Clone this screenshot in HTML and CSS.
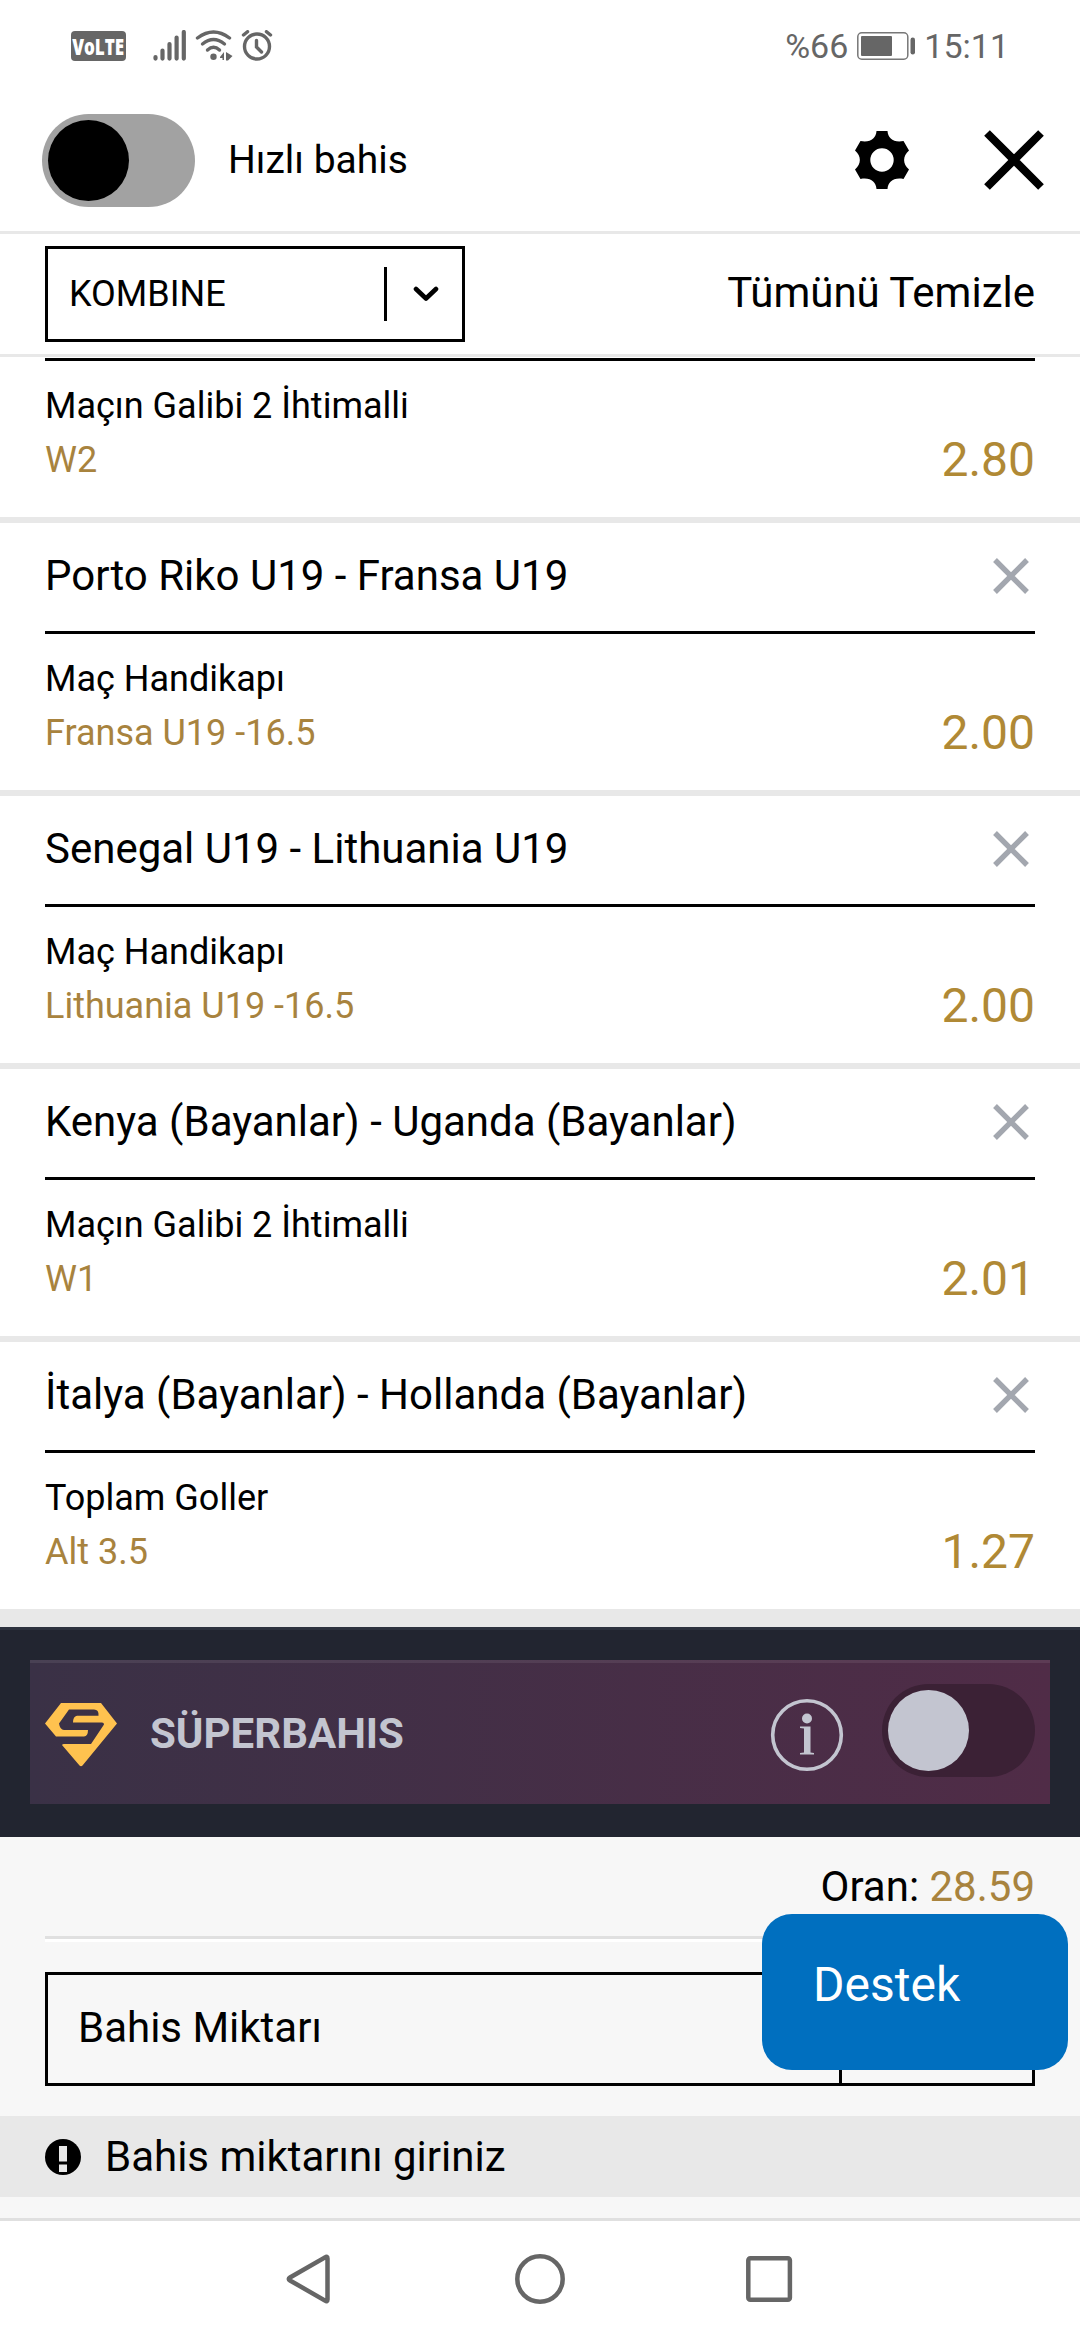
FILE: index.html
```html
<!DOCTYPE html>
<html lang="tr">
<head>
<meta charset="utf-8">
<title>Bahis Kuponu</title>
<link rel="stylesheet" href="styles.css">
</head>
<body>
<div class="screen">
  <div class="status">
    <span class="volte"><span class="volte-text">VoLTE</span></span>
    <svg class="signal" width="34" height="32" viewBox="0 0 34 32"><path d="M2.500 27V28.600M9.500 20.500V28.600M16.500 14V28.600M23.600 7.500V28.600M30.800 2V28.600" stroke="#666" stroke-width="4.200" stroke-linecap="round"/></svg>
    <svg class="wifi" width="38" height="32" viewBox="0 0 38 32"><g fill="none" stroke="#666" stroke-width="3.400" stroke-linecap="round"><path d="M2.500 8Q18.500-4 34.500 8"/><path d="M7.500 14Q18.500 5 29.500 14"/><path d="M12.500 20Q18.500 14.500 24.500 20"/></g><circle cx="18.500" cy="26.700" r="3.200" fill="#666"/><path d="M25 27L29 22V30H27.500V28H25ZM31 22L37.500 26L33 30.500H31Z" fill="#666"/></svg>
    <svg class="alarm" width="32" height="32" viewBox="0 0 32 32"><g fill="none" stroke="#666" stroke-width="3.400" stroke-linecap="round"><circle cx="16" cy="16.500" r="12.500"/><path d="M15.500 10.500V17L20.500 22M2.500 5L6.500 1.700M29.500 5L25.500 1.700"/></g></svg>
    <span class="percent">%66</span>
    <svg class="battery" width="59" height="28" viewBox="0 0 59 28"><rect x=".8" y=".8" width="50" height="26.400" rx="4" fill="none" stroke="#777" stroke-width="1.500"/><rect x="4" y="4" width="31" height="20" rx="1" fill="#666"/><rect x="53.500" y="5.500" width="4.500" height="17" rx="2.200" fill="#666"/></svg>
    <span class="clock">15:11</span>
  </div>

  <header class="header">
    <span class="toggle"><span class="knob"></span></span>
    <span class="quick">Hızlı bahis</span>
    <svg class="gear" width="54" height="58" viewBox="0 0 54 58"><path fill-rule="evenodd" d="M21.500 0H32.500C33 7 38.500 12 48.500 10L54 19.500C47.500 25 47.500 33 54 38.500L48.500 48C38.500 46 33 51 32.500 58H21.500C21 51 15.500 46 5.500 48L0 38.500C6.500 33 6.500 25 0 19.500L5.500 10C15.500 12 21 7 21.500 0ZM27 17.300A11.700 11.700 0 1 0 27 40.700A11.700 11.700 0 1 0 27 17.300Z"/></svg>
    <svg class="close" width="60" height="60" viewBox="0 0 60 60"><path d="M3 3L57 57M57 3L3 57" stroke="#000" stroke-width="8"/></svg>
  </header>

  <div class="toolbar">
    <div class="select"><span class="select-text">KOMBINE</span><span class="select-line"></span>
      <svg width="26" height="16" viewBox="0 0 26 16"><path d="M3 3L13 12.500L23 3" fill="none" stroke="#000" stroke-width="4.600" stroke-linecap="round" stroke-linejoin="round"/></svg>
    </div>
    <span class="clear">Tümünü Temizle</span>
  </div>

  <main class="bets">
    <section class="bet first">
      <div class="detail"><div><p>Maçın Galibi 2 İhtimalli</p><p class="pick">W2</p></div><span class="odd">2.80</span></div>
    </section>
    <section class="bet">
      <div class="title"><h2>Porto Riko U19 - Fransa U19</h2><svg class="remove" width="36" height="36" viewBox="0 0 36 36"><path d="M2 2L34 34M34 2L2 34"/></svg></div>
      <div class="detail"><div><p>Maç Handikapı</p><p class="pick">Fransa U19 -16.5</p></div><span class="odd">2.00</span></div>
    </section>
    <section class="bet">
      <div class="title"><h2>Senegal U19 - Lithuania U19</h2><svg class="remove" width="36" height="36" viewBox="0 0 36 36"><path d="M2 2L34 34M34 2L2 34"/></svg></div>
      <div class="detail"><div><p>Maç Handikapı</p><p class="pick">Lithuania U19 -16.5</p></div><span class="odd">2.00</span></div>
    </section>
    <section class="bet">
      <div class="title"><h2>Kenya (Bayanlar) - Uganda (Bayanlar)</h2><svg class="remove" width="36" height="36" viewBox="0 0 36 36"><path d="M2 2L34 34M34 2L2 34"/></svg></div>
      <div class="detail"><div><p>Maçın Galibi 2 İhtimalli</p><p class="pick">W1</p></div><span class="odd">2.01</span></div>
    </section>
    <section class="bet last">
      <div class="title"><h2>İtalya (Bayanlar) - Hollanda (Bayanlar)</h2><svg class="remove" width="36" height="36" viewBox="0 0 36 36"><path d="M2 2L34 34M34 2L2 34"/></svg></div>
      <div class="detail"><div><p>Toplam Goller</p><p class="pick">Alt 3.5</p></div><span class="odd">1.27</span></div>
    </section>
  </main>

  <div class="super">
    <div class="super-panel">
      <svg class="gem" width="72" height="64" viewBox="0 0 72 64"><path fill="#ffc24f" d="M16 0H56L72 20.500L37.500 62.500Q36 64 34.500 62.500L17 42Q17.500 41 19 41H46L59 21.500Q59 19.500 57 19.500H28Q28 13.500 32 12.700H53.500Q54 6.500 49 6.500H24L14 20.500Q15 27 19 27H43Q43 33 39 33.500H11L0 20.500Z"/></svg>
      <span class="super-text">SÜPERBAHIS</span>
      <svg class="info" width="74" height="74" viewBox="0 0 74 74"><circle cx="37" cy="37" r="34.300" fill="none" stroke="#c3c5d0" stroke-width="3.600"/><circle cx="37" cy="20.500" r="5" fill="#c3c5d0"/><path fill="#c3c5d0" d="M30 28.500H40.500V54.500L44 55V56.500H30V55L34 54.500V30.500L30 30Z"/></svg>
      <span class="toggle dark"><span class="knob"></span></span>
    </div>
  </div>

  <footer class="stake">
    <div class="total">Oran:&nbsp;<span class="gold">28.59</span></div>
    <div class="rule"></div>
    <div class="input"><span class="placeholder">Bahis Miktarı</span><span class="input-end"></span></div>
    <div class="notice">
      <svg width="36" height="36" viewBox="0 0 36 36"><circle cx="18" cy="18" r="18"/><path d="M14 7H22V22.500H14ZM14 25.500H22V33H14Z" fill="#e8e8e8"/></svg>
      <span>Bahis miktarını giriniz</span>
    </div>
  </footer>

  <nav class="nav">
    <svg width="50" height="50" viewBox="0 0 50 50"><path d="M41 3.500Q43.500 1.500 43.500 4.500V45.500Q43.500 48.500 41 46.500L6 26.500Q3.500 25 6 23.500Z"/></svg>
    <svg width="50" height="50" viewBox="0 0 50 50"><circle cx="25" cy="25" r="22.700"/></svg>
    <svg width="50" height="50" viewBox="0 0 50 50"><rect x="2.300" y="4.200" width="41.600" height="41.600" rx="2"/></svg>
  </nav>
  <div class="support">Destek</div>
</div>
</body>
</html>
```
FILE: styles.css
```css
* { box-sizing: border-box; margin: 0; padding: 0; }
body { width: 1080px; background: #fff; font-family: Roboto, sans-serif; color: #000; }
svg { display: block; flex: none; }
.screen { position: relative; width: 1080px; height: 2340px; overflow: hidden; background: #fff; display: flex; flex-direction: column; }
.screen > * { flex: none; }

.status { height: 92px; padding: 0 71px; display: flex; align-items: center; color: #666; font-size: 34px; line-height: 40px; }
.volte { width: 55px; height: 30px; border-radius: 4px; background: #666; color: #fff; font: 800 23px/30px "Open Sans", sans-serif; display: flex; justify-content: center; }
.volte-text { flex: none; transform: scaleX(.74); }
.signal { margin-left: 27px; }
.wifi { margin-left: 8px; }
.alarm { margin-left: 8px; }
.percent { margin-left: auto; }
.battery { margin-left: 9px; }
.clock { margin-left: 8px; }

.header { height: 142px; padding: 0 36px 2px 42px; border-bottom: 3px solid #e8e8e8; display: flex; align-items: center; }
.toggle { flex: none; width: 153px; height: 93px; padding: 6px; border-radius: 47px; background: #a2a2a2; display: flex; }
.knob { width: 81px; height: 81px; border-radius: 50%; background: #000; }
.quick { margin: 0 0 2px 33px; font-size: 39px; line-height: 46px; }
.gear { margin: 0 0 2px auto; }
.close { margin: 0 0 2px 75px; }

.toolbar { height: 123px; padding: 12px 45px; border-bottom: 3px solid #e8e8e8; display: flex; justify-content: space-between; }
.select { width: 420px; height: 96px; padding: 0 23px 0 21px; border: 3px solid #000; display: flex; align-items: center; }
.select-text { flex: 1; font-size: 36px; line-height: 42px; }
.select-line { width: 3px; height: 54px; margin-right: 26px; background: #000; }
.clear { font-size: 42px; line-height: 50px; margin-top: 22px; }

.bets { padding-top: 1px; }
.bet { height: 273px; padding: 0 45px; border-bottom: 6px solid #e8e8e8; }
.bet.first { height: 165px; }
.bet.last { height: 285px; border-bottom-width: 18px; }
.title { height: 108px; padding-bottom: 2px; display: flex; align-items: center; justify-content: space-between; }
.title h2 { font-size: 42px; line-height: 50px; font-weight: 400; }
.remove { margin-right: 6px; stroke: #a3a7af; stroke-width: 5.400; }
.detail { border-top: 3px solid #000; padding-top: 18px; display: flex; justify-content: space-between; align-items: flex-end; font-size: 36px; line-height: 54px; }
.pick, .gold { color: #a8833e; }
.odd { font-size: 48px; color: #b08935; }

.super { height: 210px; padding: 30px; border-top: 3px solid #2d323e; background: #222530; }
.super-panel { height: 144px; padding: 0 15px; border-top: 3px solid rgba(255, 255, 255, .08); background: linear-gradient(90deg, #3a3146, #502c47) border-box; display: flex; align-items: center; }
.gem { margin-top: 2px; }
.super-text { margin-left: 33px; font-size: 42px; line-height: 50px; font-weight: 700; color: #c3c5d0; }
.info { margin: 2px 38px 0 auto; }
.dark { margin-bottom: 6px; background: #3b2135; }
.dark .knob { background: #c3c5d0; }

.stake { height: 384px; background: #f7f7f7; border-bottom: 3px solid #e0e0e0; font-size: 42px; line-height: 50px; }
.total { height: 99px; padding: 25px 45px 0; display: flex; justify-content: flex-end; }
.rule { height: 6px; margin: 0 45px; border-top: 3px solid #e0e0e0; background: #fff; }
.input { height: 114px; margin: 30px 45px; border: 3px solid #000; display: flex; align-items: center; justify-content: space-between; padding-left: 30px; }
.placeholder { padding-bottom: 3px; }
.input-end { width: 193px; height: 100%; border-left: 3px solid #000; }
.notice { height: 81px; padding: 0 45px; background: #e8e8e8; display: flex; align-items: center; gap: 24px; }

.nav { height: 119px; padding: 0 0 3px 284px; display: flex; align-items: center; gap: 181px; fill: none; stroke: #666; stroke-width: 4.500; }
.support { position: absolute; left: 762px; top: 1914px; width: 306px; height: 156px; padding: 43px 51px; border-radius: 30px; background: #006fbf; color: #fff; font-size: 48px; line-height: 56px; }
```
